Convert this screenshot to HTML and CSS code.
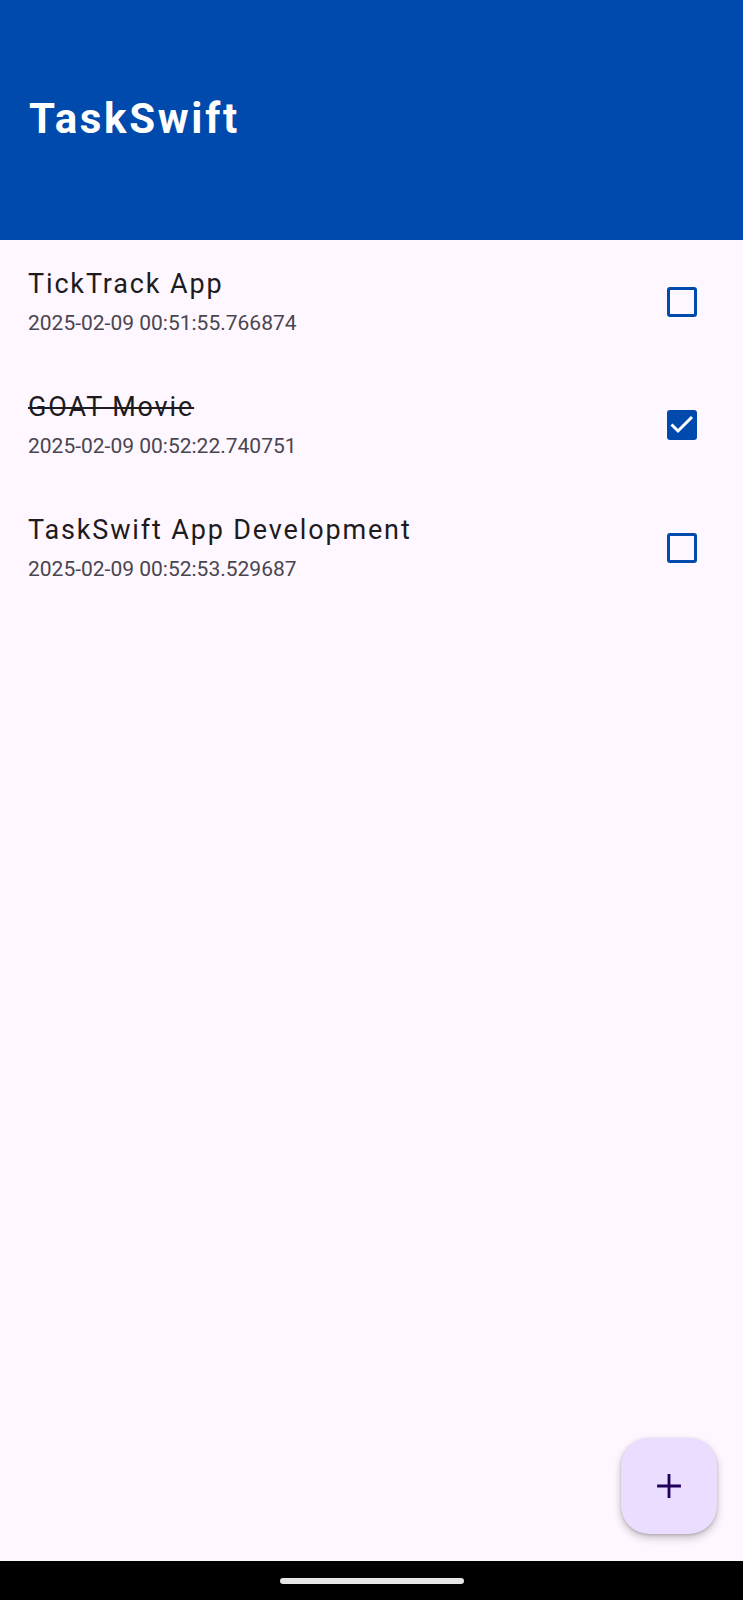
FILE: index.html
```html
<!DOCTYPE html>
<html>
<head>
<meta charset="utf-8">
<link rel="stylesheet" href="styles.css">
</head>
<body>
<div class="screen">
  <header class="appbar">
    <h1 class="appbar-title">TaskSwift</h1>
  </header>
  <main class="list">
    <div class="item">
      <div class="item-text">
        <div class="item-title">TickTrack App</div>
        <div class="item-sub">2025-02-09 00:51:55.766874</div>
      </div>
      <div class="checkbox"></div>
    </div>
    <div class="item">
      <div class="item-text">
        <div class="item-title done">GOAT Movie</div>
        <div class="item-sub">2025-02-09 00:52:22.740751</div>
      </div>
      <div class="checkbox checked">
        <svg viewBox="0 0 30 30" width="30" height="30"><path d="M4.5 14.5 L11 21 L25 7" fill="none" stroke="#fff" stroke-width="3"/></svg>
      </div>
    </div>
    <div class="item">
      <div class="item-text">
        <div class="item-title">TaskSwift App Development</div>
        <div class="item-sub">2025-02-09 00:52:53.529687</div>
      </div>
      <div class="checkbox"></div>
    </div>
  </main>
  <nav class="navbar"><div class="handle"></div></nav>
  <button class="fab" aria-label="Add">
    <svg viewBox="0 0 24 24" width="26" height="26"><path d="M12 1 V23 M1 12 H23" stroke="#21005D" stroke-width="2.6" fill="none"/></svg>
  </button>
</div>
</body>
</html>
```
FILE: styles.css
```css
html, body {
  margin: 0;
  padding: 0;
}
body {
  background: #FEF7FF;
  font-family: Roboto, "Noto Sans", sans-serif;
}
.screen {
  position: relative;
  width: 743px;
  height: 1600px;
  display: flex;
  flex-direction: column;
  overflow: hidden;
}
.appbar {
  height: 240px;
  background: #004AAD;
  box-sizing: border-box;
  padding: 98px 0 0 29px;
  flex: none;
}
.appbar-title {
  margin: 0;
  font-size: 42px;
  line-height: 42px;
  font-weight: 700;
  color: #fff;
  letter-spacing: 2.7px;
}
.list {
  flex: 1;
}
.item {
  height: 123px;
  display: flex;
  align-items: center;
  padding: 0 46px 0 28px;
}
.item-text {
  flex: 1;
}
.item-title {
  font-size: 27px;
  line-height: 43.5px;
  color: #1D1B20;
  letter-spacing: 1.85px;
}
.item-title.done {
  text-decoration: line-through;
  text-decoration-thickness: 2px;
}
.item-sub {
  font-size: 21px;
  line-height: 33.3px;
  color: #49454F;
  letter-spacing: 0;
}
.checkbox {
  width: 30px;
  height: 30px;
  box-sizing: border-box;
  border: 3.5px solid #004AAD;
  border-radius: 3px;
  flex: none;
}
.checkbox.checked {
  background: #004AAD;
  border: none;
}
.checkbox svg {
  display: block;
}
.navbar {
  height: 39px;
  background: #000;
  flex: none;
  display: flex;
  justify-content: center;
  padding-top: 17px;
  box-sizing: border-box;
}
.handle {
  width: 184px;
  height: 6px;
  border-radius: 3px;
  background: #E6E6E6;
}
.fab {
  position: absolute;
  left: 621px;
  top: 1438px;
  width: 96px;
  height: 96px;
  border: none;
  border-radius: 28px;
  background: #EADDFF;
  box-shadow: 0 4px 8px rgba(0,0,0,0.22), 0 1px 3px rgba(0,0,0,0.18);
  display: flex;
  align-items: center;
  justify-content: center;
  padding: 0;
}
.fab svg {
  display: block;
}
```
